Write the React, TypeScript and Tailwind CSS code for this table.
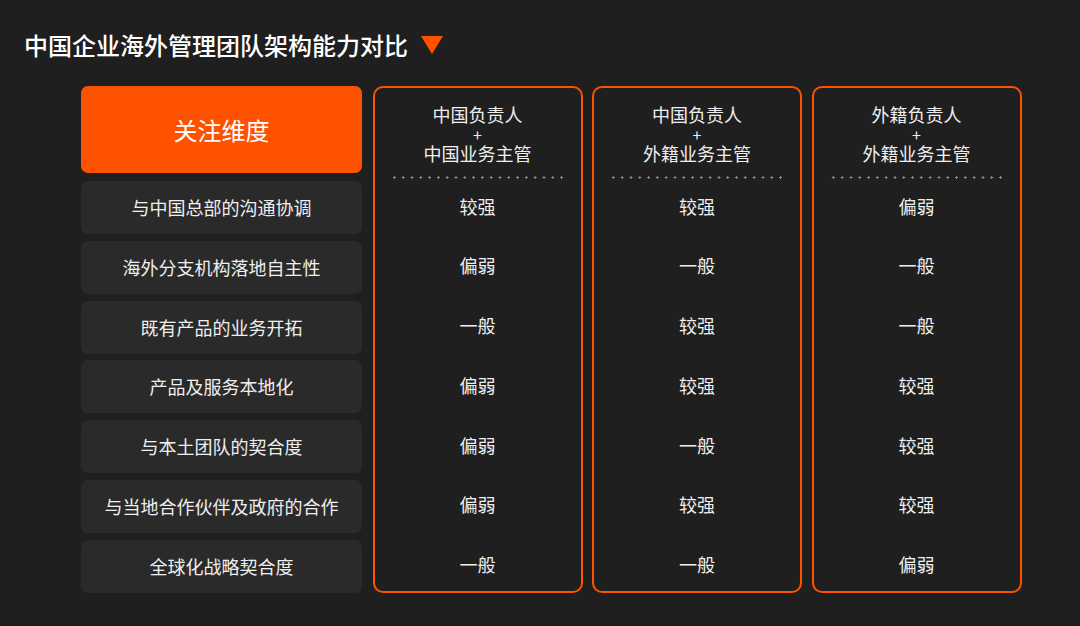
import React from "react";

const rows = [
  "与中国总部的沟通协调",
  "海外分支机构落地自主性",
  "既有产品的业务开拓",
  "产品及服务本地化",
  "与本土团队的契合度",
  "与当地合作伙伴及政府的合作",
  "全球化战略契合度",
];

const cols = [
  { a: "中国负责人", b: "中国业务主管", v: ["较强", "偏弱", "一般", "偏弱", "偏弱", "偏弱", "一般"] },
  { a: "中国负责人", b: "外籍业务主管", v: ["较强", "一般", "较强", "较强", "一般", "较强", "一般"] },
  { a: "外籍负责人", b: "外籍业务主管", v: ["偏弱", "一般", "一般", "较强", "较强", "较强", "偏弱"] },
];

export default function App() {
  return (
    <div
      className="w-[1080px] h-[626px] bg-[#1f1f1f] text-[#efefef] overflow-hidden"
      style={{ fontFamily: '"Noto Sans CJK SC", "Noto Sans", sans-serif' }}
    >
      <div className="flex items-center pl-[24px] pt-[29px] h-[60px]">
        <span className="text-[24px] leading-[30px] text-white font-medium">中国企业海外管理团队架构能力对比</span>
        <svg width="22" height="18" viewBox="0 0 22 18" className="ml-[13px]">
          <polygon points="0,0 22,0 11,18" fill="#ff5200" />
        </svg>
      </div>
      <div className="flex ml-[81px] mt-[26px] gap-[9.5px]">
        <div className="w-[281px] flex flex-col mr-[1px]">
          <div className="h-[87px] rounded-[7px] bg-[#ff5200] flex items-center justify-center text-[24px] text-white">
            关注维度
          </div>
          <div className="flex flex-col gap-[6.8px] mt-[8px]">
            {rows.map((r) => (
              <div key={r} className="h-[53px] rounded-[7px] bg-[#2a2a2a] flex items-center justify-center text-[18px]">
                {r}
              </div>
            ))}
          </div>
        </div>
        {cols.map((c, i) => (
          <div key={i} className="w-[210px] rounded-[10px] border-2 border-[#ff5200] flex flex-col">
            <div className="h-[91.5px] flex flex-col items-center relative">
              <div className="flex flex-col items-center text-[18px] leading-[19.5px] mt-[17px]">
                <span>{c.a}</span>
                <span className="text-[16px]">+</span>
                <span>{c.b}</span>
              </div>
              <div className="absolute left-[15px] right-[15px] top-[87.5px] h-[3px] bg-[radial-gradient(circle,#8a8a8a_1px,transparent_1.3px)] bg-[length:8.8px_3px]" />
            </div>
            <div className="flex flex-col gap-[6.8px]">
              {c.v.map((v, j) => (
                <div key={j} className="h-[53px] flex items-center justify-center text-[18px]">
                  {v}
                </div>
              ))}
            </div>
          </div>
        ))}
      </div>
    </div>
  );
}
